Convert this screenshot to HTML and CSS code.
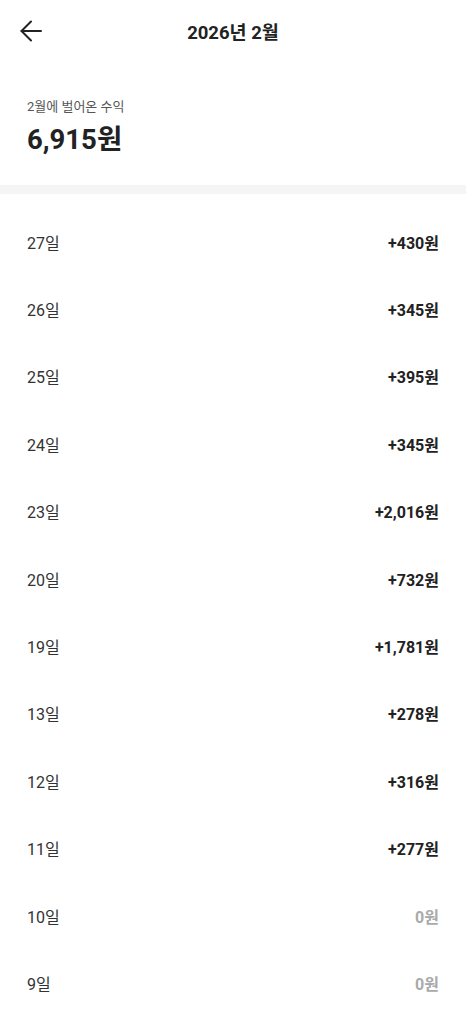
FILE: index.html
```html
<!DOCTYPE html>
<html lang="ko">
  <head>
    <meta charset="UTF-8">
    <meta name="viewport" content="width=device-width, initial-scale=1.0">
    <title>2026년 2월</title>
    <link rel="stylesheet" href="styles.css">
  </head>
  <body>
    <div class="header">
      <button class="back" aria-label="뒤로">
        <svg width="24" height="24" viewBox="0 0 24 24" fill="none" stroke="#222" stroke-width="2" stroke-linecap="round" stroke-linejoin="round">
          <path d="M22 12H2.5"/>
          <path d="M12 2.5L2.5 12L12 21.5"/>
        </svg>
      </button>
      <h1 class="title">2026년 2월</h1>
    </div>

    <div class="summary">
      <p class="summaryLabel">2월에 벌어온 수익</p>
      <p class="summaryAmount">6,915원</p>
    </div>

    <div class="divider"></div>

    <ul class="days">
      <li class="day"><span class="date">27일</span><span class="amount">+430원</span></li>
      <li class="day"><span class="date">26일</span><span class="amount">+345원</span></li>
      <li class="day"><span class="date">25일</span><span class="amount">+395원</span></li>
      <li class="day"><span class="date">24일</span><span class="amount">+345원</span></li>
      <li class="day"><span class="date">23일</span><span class="amount">+2,016원</span></li>
      <li class="day"><span class="date">20일</span><span class="amount">+732원</span></li>
      <li class="day"><span class="date">19일</span><span class="amount">+1,781원</span></li>
      <li class="day"><span class="date">13일</span><span class="amount">+278원</span></li>
      <li class="day"><span class="date">12일</span><span class="amount">+316원</span></li>
      <li class="day"><span class="date">11일</span><span class="amount">+277원</span></li>
      <li class="day"><span class="date">10일</span><span class="amount zero">0원</span></li>
      <li class="day"><span class="date">9일</span><span class="amount zero">0원</span></li>
    </ul>
  </body>
</html>
```

FILE: styles.css
```css
body {
  margin: 0;
  font-family: Roboto, "Noto Sans CJK KR", sans-serif;
  color: #222;
  background: #fff;
}
.header {
  position: relative;
  height: 62px;
  display: flex;
  align-items: center;
  justify-content: center;
}
.back {
  position: absolute;
  left: 19px;
  top: 19px;
  padding: 0;
  border: none;
  background: none;
  width: 24px;
  height: 24px;
  display: flex;
}
.title {
  margin: 0;
  font-size: 18.5px;
  font-weight: bold;
  color: #222;
}
.summary {
  padding: 36px 27px 28px;
}
.summaryLabel {
  margin: 0;
  font-size: 13px;
  line-height: 18px;
  color: #555;
}
.summaryAmount {
  margin: 7px 0 0;
  font-size: 27.5px;
  line-height: 34px;
  font-weight: bold;
  color: #222;
}
.divider {
  height: 9px;
  background-color: #f5f5f5;
}
.days {
  list-style: none;
  margin: 0;
  padding: 14px 27px 0 27px;
}
.day {
  height: 67.4px;
  display: flex;
  align-items: center;
  justify-content: space-between;
  font-size: 16px;
}
.date {
  color: #333;
}
.amount {
  font-weight: bold;
  color: #222;
}
.zero {
  color: #aaa;
}
```
